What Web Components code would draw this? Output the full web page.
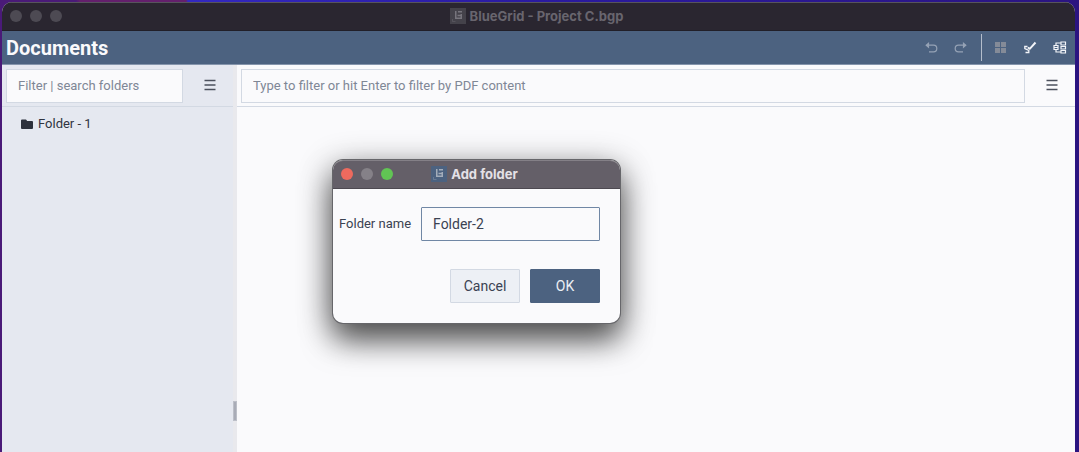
<!DOCTYPE html>
<html lang="en">
<head>
<meta charset="utf-8">
<title>BlueGrid - Project C.bgp</title>
<style>
  html, body { height: 100%; margin: 0; }
  body {
    display: flex; overflow: hidden;
    background: linear-gradient(90deg, #4a1a78 0, #4a1a78 76px, #641f6c 80px, #641f6c 186px, #3328c0 188px, #2a1aa0 50%, #2b1480 100%);
    font: 14px/20px Roboto, "Liberation Sans", sans-serif; color: #3b4252;
    --blue:#4c6280; --line:#d3d9e3; --paper:#fafafc;
  }
  bg-window { flex: 1; }
</style>
</head>
<body>
<bg-window>
  <title-bar slot="title" label="BlueGrid - Project C.bgp" inactive></title-bar>
  <app-header slot="header" label="Documents"></app-header>
  <search-bar slot="side" label="Filter | search folders"></search-bar>
  <folder-item slot="side">Folder - 1</folder-item>
  <search-bar slot="main" label="Type to filter or hit Enter to filter by PDF content"></search-bar>
  <folder-dialog slot="dialog" label="Folder name" value="Folder-2"></folder-dialog>
</bg-window>

<script>
(() => {
  const define = (name, render) => {
    customElements.define(name, class extends HTMLElement {
      constructor() {
        super();
        this.attachShadow({ mode: 'open' });
      }
      connectedCallback() {
        this.shadowRoot.innerHTML = `<style>:host,*{box-sizing:border-box}</style>` + render(this);
      }
    });
  };

  // outer window: title, header, then sidebar | splitter | main
  define('bg-window', () => `
    <style>
      :host { display:flex; flex-direction:column; min-width:0; position:relative; padding:2px 4px 0 2px; }
      .frame { flex:1; display:flex; flex-direction:column; min-height:0; overflow:hidden;
        border-radius:10px 10px 0 0; background:var(--paper); }
      .body { flex:1; display:flex; min-height:0; }
      .side { flex:0 0 231px; min-width:0; background:#e5e8f0; }
      .split { flex:0 0 4px; background:#e9e9ed; display:flex; flex-direction:column; justify-content:flex-end; padding-bottom:31px; }
      .grip { height:20px; background:#a9acb7; border:1px solid #bcbfc8; }
      main { flex:1; min-width:0; }
    </style>
    <div class="frame">
      <slot name="title"></slot>
      <slot name="header"></slot>
      <div class="body">
        <div class="side"><slot name="side"></slot></div>
        <div class="split"><div class="grip"></div></div>
        <main><slot name="main"></slot></main>
      </div>
    </div>
    <slot name="dialog"></slot>`);

  define('title-bar', el => `
    <style>
      :host { display:grid; grid-template-columns:1fr auto 1fr; align-items:center; height:29px; flex:none; padding:0 4px 2px 0;
        background:#645f68; border-top:1px solid #848087; border-bottom:1px solid #4d4951;
        color:#e4e1e6; --logo:#4c6280; --mark:#a3adba; }
      :host([inactive]) { background:#2a2630; border-top-color:#57545c; border-bottom-color:#211f28;
        color:#68656e; --logo:#44424a; --mark:#77757d; --r:#4d4a53; --y:#4d4a53; --g:#4d4a53; }
      .dots { display:flex; gap:8px; padding-left:8px; }
      .dots i { width:12px; height:12px; border-radius:50%; background:var(--r,#ed6a5e); }
      .dots i:nth-child(2) { background:var(--y,#858188); }
      .dots i:nth-child(3) { background:var(--g,#61c554); }
      .label { display:flex; align-items:center; gap:4px; font:700 13px/16px Inter, sans-serif; white-space:nowrap; }
      svg { display:block; width:16px; height:16px; }
    </style>
    <div class="dots"><i></i><i></i><i></i></div>
    <div class="label">
      <svg viewBox="0 0 16 16" fill="none" aria-hidden="true">
        <path d="M0 0h16v16H0z" fill="var(--logo)"/>
        <path d="M5.750 3v7.250h5.500V6M7.500 7.500h4M8 3.750h4" stroke="var(--mark)" stroke-width="1.500"/>
        <path d="M2.500 11v2.500h3" stroke="var(--mark)" stroke-width=".7" opacity=".5"/>
      </svg>
      <span>${el.getAttribute('label')}</span>
    </div>`);

  define('app-header', el => `
    <style>
      :host { display:flex; align-items:center; justify-content:space-between; height:34px; flex:none; padding:0 7px 0 4px;
        background:var(--blue); border-bottom:1px solid #8595ac; color:#fafafc; }
      h1 { margin:0; font:700 20px/24px Roboto, sans-serif; }
      nav { display:flex; align-items:center; gap:14px; }
      button { display:block; width:16px; height:16px; padding:0; border:0; background:none; color:#f2f4f8; }
      button.dim { color:#95a2b5; }
      button.grey { color:#848b98; }
      hr { width:1px; height:27px; margin:0 -4px 0 -2px; border:0; background:#b4bdcb; }
      svg { display:block; width:16px; height:16px; }
    </style>
    <h1>${el.getAttribute('label')}</h1>
    <nav>
      <button class="dim" aria-label="Undo"><svg viewBox="0 0 16 16" fill="none" stroke="currentColor" stroke-width="1.2"><path d="M5.500 3.200v4L3.200 5.200z" fill="currentColor"/><path d="M5 5.200h5.500a3.300 3.300 0 0 1 0 6.600H6"/></svg></button>
      <button class="dim" aria-label="Redo"><svg viewBox="0 0 16 16" fill="none" stroke="currentColor" stroke-width="1.2"><path d="M10.500 3.200v4l2.300-2z" fill="currentColor"/><path d="M11 5.200H5.500a3.300 3.300 0 0 0 0 6.600H10"/></svg></button>
      <hr>
      <button class="grey" aria-label="Grid"><svg viewBox="0 0 16 16" fill="currentColor"><path d="M3 2h5v5H3zM9 2h5v5H9zM3 8h5v5H3zM9 8h5v5H9z"/></svg></button>
      <button aria-label="Markup"><svg viewBox="0 0 16 16" fill="none" stroke="currentColor"><path d="M13.500 2.500L7.800 8.800L5.800 7.500" stroke-width="2"/><path d="M5.500 6.500H2.800v2l4 1.800v2.200H3.500" stroke-width="1.300"/></svg></button>
      <button aria-label="Structure"><svg viewBox="0 0 16 16" fill="none" stroke="currentColor" stroke-width="1.200"><path d="M2 5.500h4v4H2zM9 2h4.500v3H9zM9 6.500h4.500v2.500H9zM9 10.500h4.500v2.500H9zM4 5.500V3h5M2 7.500h4M4 9.500v2.500h5"/></svg></button>
    </nav>`);

  define('search-bar', el => `
    <style>
      :host { display:flex; align-items:center; height:42px; padding:0 16px 0 4px; border-bottom:1px solid var(--line); gap:20px; }
      input { flex:1; min-width:0; height:34px; padding:0 11px; border:1px solid var(--line); outline:0; background:var(--paper);
        font-family:inherit; font-size:13px; color:#3b4252; }
      input::placeholder { color:#7f8796; opacity:1; }
      button { flex:none; width:14px; height:14px; padding:0; border:0; background:none; color:#4b505c; }
      svg { display:block; }
    </style>
    <input type="text" placeholder="${el.getAttribute('label')}" aria-label="${el.getAttribute('label')}">
    <button aria-label="Menu"><svg width="14" height="14" viewBox="0 0 14 14" stroke="currentColor" stroke-width="1.300"><path d="M1.500 1.500h11M1.500 6h11M1.500 10.500h11"/></svg></button>`);

  define('folder-item', () => `
    <style>
      :host { display:flex; align-items:center; gap:5px; padding:7px 19px; font-size:13px; color:#30343f; }
    </style>
    <svg width="12" height="12" viewBox="0 0 12 12" fill="#2d313c" aria-hidden="true"><path d="M1 1.500h4L6.200 3H11a1 1 0 0 1 1 1v6a1 1 0 0 1-1 1H1a1 1 0 0 1-1-1V2.500a1 1 0 0 1 1-1z"/></svg>
    <span><slot></slot></span>`);

  define('folder-dialog', el => `
    <style>
      :host { position:absolute; left:333px; top:160px; width:287px; border-radius:10px; background:var(--paper);
        box-shadow:0 0 0 1px #66666a, 0 18px 30px rgba(0,0,0,.5), 0 8px 34px rgba(0,0,0,.45); }
      title-bar { border-radius:10px 10px 0 0; }
      form { display:grid; grid-template-columns:minmax(0,1fr); gap:28px; padding:18px 20px 20px 6px; }
      label { display:flex; align-items:center; gap:10px; white-space:nowrap; font-size:13px; }
      input { flex:1; min-width:0; height:34px; padding:0 11px; border:1px solid #7087a5; border-radius:1px; outline:0;
        background:var(--paper); font-family:inherit; font-size:14px; color:#3b4252; }
      .row { display:flex; justify-content:flex-end; gap:10px; }
      button { width:70px; height:34px; padding:0; border:1px solid var(--line); border-radius:1px; background:#edf0f5; font:inherit; color:#3b4252; }
      .ok { border-color:var(--blue); background:var(--blue); color:#eceff4; }
    </style>
    <title-bar label="Add folder"></title-bar>
    <form>
      <label><span>${el.getAttribute('label')}</span><input type="text" value="${el.getAttribute('value')}"></label>
      <div class="row"><button type="button">Cancel</button><button type="button" class="ok">OK</button></div>
    </form>`);
})();
</script>
</body>
</html>
